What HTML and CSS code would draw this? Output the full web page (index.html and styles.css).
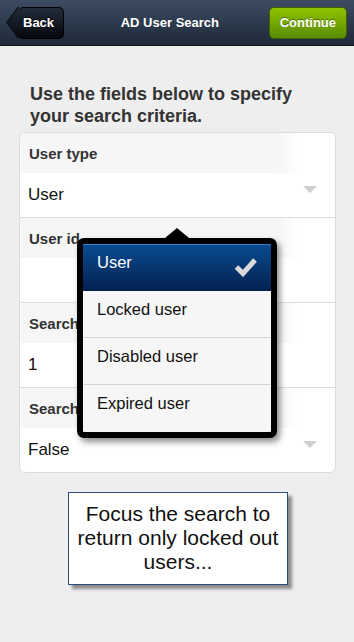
FILE: index.html
```html
<html lang="en">
<head>
    <meta charset="UTF-8">
    <meta name="viewport" content="width=device-width, initial-scale=1.0">
    <title>AD User Search</title>
    <link rel="stylesheet" href="styles.css">
</head>
<body>
    <header class="toolbar">
        <a href="#" class="btn-back">Back</a>
        <h1 class="toolbar-title">AD User Search</h1>
        <a href="#" class="btn-continue">Continue</a>
    </header>

    <main class="content">
        <p class="intro">Use the fields below to specify your search criteria.</p>

        <div class="form-card">
            <div class="field-label first">User type</div>
            <div class="field-value">User <span class="caret"></span></div>

            <div class="field-label">User id</div>
            <div class="field-value"></div>

            <div class="field-label">Search limit</div>
            <div class="field-value number">1</div>

            <div class="field-label">Search subtree</div>
            <div class="field-value last">False <span class="caret"></span></div>

            <!-- open picker for the user type field -->
            <ul class="picker">
                <li class="picker-item selected">
                    User
                    <svg class="check" width="23" height="20" viewBox="0 0 23 20">
                        <path d="M2.5 10 L9 16.5 L21 3" fill="none" stroke="#dadada" stroke-width="5"/>
                    </svg>
                </li>
                <li class="picker-item">Locked user</li>
                <li class="picker-item">Disabled user</li>
                <li class="picker-item">Expired user</li>
            </ul>
        </div>

        <div class="note">Focus the search to return only locked out users...</div>
    </main>
</body>
</html>
```

FILE: styles.css
```css
body {
    margin: 0;
    background-color: #eeeeee;
    font-family: "Liberation Sans", Arial, sans-serif;
}

.toolbar {
    display: flex;
    align-items: center;
    height: 45px;
    padding: 0 7px 0 6px;
    background: linear-gradient(#3c4c62, #1e2939);
    border-bottom: 1px solid #0b0f15;
}

.btn-back {
    position: relative;
    z-index: 0;
    display: flex;
    align-items: center;
    height: 32px;
    box-sizing: border-box;
    margin-left: 12px;
    padding: 0 9px 0 4px;
    border: 1px solid #000;
    border-radius: 5px;
    background: linear-gradient(#232d3b, #05070b);
    color: #fff;
    font-size: 13px;
    font-weight: bold;
    text-decoration: none;
    text-shadow: 0 -1px 0 #000;
}

.btn-back::before {
    content: "";
    position: absolute;
    z-index: -1;
    left: -12.3px;
    top: 3.7px;
    width: 22.6px;
    height: 22.6px;
    box-sizing: border-box;
    border-left: 1px solid #000;
    border-bottom: 1px solid #000;
    background: linear-gradient(to bottom right, #232d3b, #05070b);
    transform: scaleX(0.75) rotate(45deg);
}

.toolbar-title {
    flex: 1;
    margin: 0 0 0 7px;
    text-align: center;
    color: #fff;
    font-size: 13px;
    font-weight: bold;
}

.btn-continue {
    display: flex;
    align-items: center;
    height: 32px;
    box-sizing: border-box;
    padding: 0 10px;
    border: 1px solid #3f6100;
    border-radius: 5px;
    background: linear-gradient(#8fc400, #5a8b00);
    color: #fff;
    font-size: 13px;
    font-weight: bold;
    text-decoration: none;
    text-shadow: 0 -1px 0 rgba(0, 0, 0, 0.4);
}

.content {
    padding: 38px 18px 20px 19px;
}

.intro {
    margin: 0 20px 5px 11px;
    color: #333;
    font-size: 18px;
    line-height: 21.5px;
    font-weight: bold;
}

.form-card {
    position: relative;
    background: #fff;
    border: 1px solid #dcdcdc;
    border-radius: 6px;
}

.field-label {
    display: flex;
    align-items: center;
    height: 40px;
    padding-left: 9px;
    color: #333;
    font-size: 15px;
    font-weight: bold;
    background: linear-gradient(to right, #f6f6f6 82%, #fff 89%);
}

.field-label.first {
    border-radius: 5px 5px 0 0;
}

.field-value {
    display: flex;
    align-items: center;
    height: 44px;
    padding-left: 8px;
    color: #111;
    font-size: 17px;
    border-bottom: 1px solid #dddddd;
}

.field-value.number {
    color: #220404;
}

.field-value.last {
    border-bottom: none;
    border-radius: 0 0 5px 5px;
}

.caret {
    align-self: flex-start;
    margin: 13px 18px 0 auto;
    width: 0;
    height: 0;
    border-left: 7px solid transparent;
    border-right: 7px solid transparent;
    border-top: 7px solid #cfcfcf;
}

.picker {
    position: absolute;
    left: 57px;
    top: 105px;
    width: 188px;
    margin: 0;
    padding: 0;
    list-style: none;
    background: #f6f6f6;
    border: 6px solid #000;
    border-radius: 7px;
    box-shadow: 3px 4px 6px rgba(0, 0, 0, 0.45);
}

.picker::before {
    content: "";
    position: absolute;
    top: -16px;
    left: 82px;
    border-left: 12px solid transparent;
    border-right: 12px solid transparent;
    border-bottom: 10px solid #000;
}

.picker-item {
    display: flex;
    align-items: flex-start;
    height: 47px;
    box-sizing: border-box;
    padding: 8px 14px 0;
    color: #111;
    font-size: 16.5px;
    line-height: 20px;
    border-bottom: 1px solid #d4d4d4;
}

.picker-item:last-child {
    border-bottom: none;
}

.picker-item.selected {
    color: #fff;
    background: linear-gradient(#0a4b91, #03214f);
    border-top: 1px solid #3a78c8;
    border-bottom: none;
    padding-top: 7px;
}

.check {
    margin: 5px 0 0 auto;
}

.note {
    width: 220px;
    box-sizing: border-box;
    margin: 19px 0 0 49px;
    padding: 9px 6px 10px;
    background: #fff;
    border: 1px solid #2d4d80;
    box-shadow: 4px 4px 3px #8a8a8a;
    color: #111;
    text-align: center;
    font-size: 21px;
    line-height: 24px;
}
```
